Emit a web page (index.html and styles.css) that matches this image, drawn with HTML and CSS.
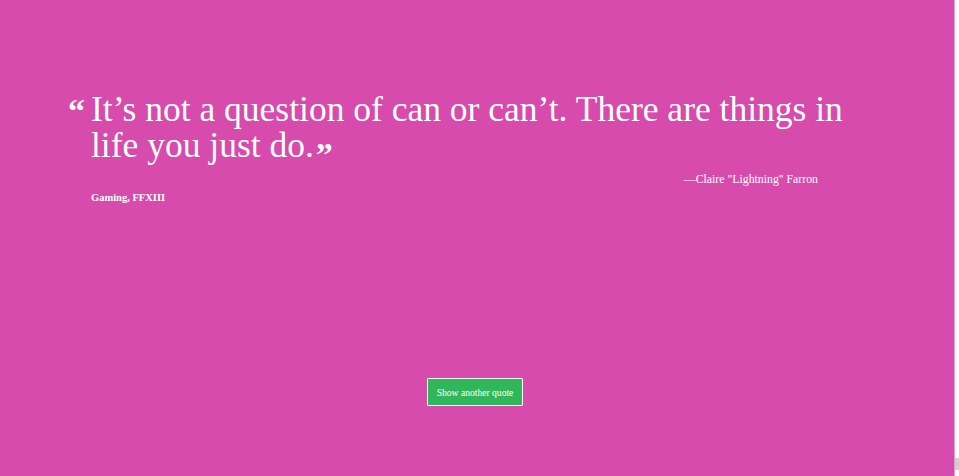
FILE: index.html
```html
<!DOCTYPE html>
<html lang="en">
<head>
<meta charset="utf-8">
<title>Random Quote</title>
<link rel="stylesheet" href="styles.css">
</head>
<body>
<div class="page">
  <main class="stage">
    <section class="quote">
      <p class="quote-text"><span class="mark open">&ldquo;</span>It&rsquo;s not a question of can or can&rsquo;t. There are things in life you just do.<span class="mark close">&rdquo;</span></p>
      <p class="author">&mdash;Claire "Lightning" Farron</p>
      <p class="source">Gaming, FFXIII</p>
    </section>
    <div class="actions">
      <button class="btn" type="button">Show another quote</button>
    </div>
  </main>
  <div class="scrollbar"><div class="thumb"></div></div>
</div>
</body>
</html>
```
FILE: styles.css
```css
html, body {
  margin: 0;
  padding: 0;
  height: 100%;
}
body {
  font-family: "Liberation Serif", "DejaVu Serif", serif;
  color: #fff;
  background: #fff;
}
.page {
  display: flex;
  height: 476px;
  overflow: hidden;
}
.stage {
  flex: 1;
  background: #d64bab;
  display: flex;
  flex-direction: column;
  padding: 91px 0 0 91px;
  box-sizing: border-box;
}
.quote {
  width: 780px;
}
.quote-text {
  margin: 0;
  font-size: 35.5px;
  line-height: 36px;
  text-indent: -23px;
}
.mark {
  font-weight: bold;
  font-size: 34px;
  line-height: 10px;
  display: inline-block;
  text-indent: 0;
}
.mark.open {
  width: 23px;
  vertical-align: -1px;
}
.mark.close {
  margin-left: 2px;
  vertical-align: -9px;
}
.author {
  margin: 8px 0 0;
  text-align: right;
  font-size: 11.8px;
  line-height: 16px;
  padding-right: 53px;
}
.source {
  margin: 4px 0 0;
  font-size: 10.5px;
  font-weight: bold;
  line-height: 14px;
}
.actions {
  margin-top: 173px;
  display: flex;
  justify-content: center;
  padding-right: 95px;
}
.btn {
  font-family: inherit;
  font-size: 9.6px;
  color: #fff;
  background: #2fb75a;
  border: 1px solid #fff;
  border-radius: 1px;
  width: 96px;
  height: 28px;
  padding: 0;
}
.scrollbar {
  width: 4px;
  background: #fff;
  border-left: 1px solid #e59ad0;
  display: flex;
  flex-direction: column;
  justify-content: flex-end;
  padding-bottom: 6px;
}
.thumb {
  height: 12px;
  background: #cfcfcf;
}
```
